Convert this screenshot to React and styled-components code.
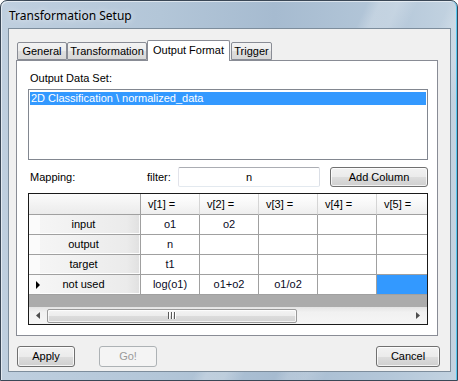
import React from "react";
import styled, { createGlobalStyle } from "styled-components";

const GlobalStyle = createGlobalStyle`
  html, body { margin: 0; padding: 0; background: #ffffff; }
  body { font-family: "Liberation Sans", Arial, sans-serif; font-size: 11px; color: #000; }
  * { box-sizing: border-box; }
`;

const Window = styled.div`
  width: 458px;
  height: 381px;
  display: flex;
  flex-direction: column;
  border: 1px solid #3a4756;
  border-radius: 7px 7px 0 0;
  overflow: hidden;
  background:
    linear-gradient(115deg, transparent 0 58%, rgba(255,255,255,0.22) 60% 63%, transparent 66% 71%, rgba(255,255,255,0.15) 73% 76%, transparent 79%),
    linear-gradient(90deg, #bfcfdf 0%, #b3c6d8 35%, #a6bbd0 60%, #b4c7d9 85%, #c3d3e1 100%);
  box-shadow: inset 1px 1px 0 rgba(255,255,255,0.55), inset -1px 0 0 #58c6f0;
`;

const TitleBar = styled.div`
  height: 27px;
  flex: none;
  display: flex;
  align-items: center;
  padding-left: 8px;
  padding-top: 1px;
  font-family: "Noto Sans", "Liberation Sans", sans-serif;
  font-size: 12px;
  color: #000;
  text-shadow: 0 0 6px rgba(255,255,255,0.9);
`;

const Client = styled.div`
  flex: 1;
  margin: 0 6px 8px 7px;
  background: #f0f0f0;
  border: 1px solid #7d8d9c;
  display: flex;
  flex-direction: column;
`;

const TabsArea = styled.div`
  margin: 11px 12px 0 7px;
  display: flex;
  flex-direction: column;
`;

const TabStrip = styled.div`
  height: 20px;
  display: flex;
  align-items: flex-end;
  padding-left: 1px;
`;

const Tab = styled.div`
  width: ${(p) => p.$w}px;
  margin-left: ${(p) => p.$ml || 0}px;
  height: ${(p) => (p.$active ? 21 : 18)}px;
  margin-bottom: ${(p) => (p.$active ? -1 : 0)}px;
  position: relative;
  z-index: ${(p) => (p.$active ? 2 : 1)};
  border: 1px solid #898c95;
  border-bottom: ${(p) => (p.$active ? "none" : "1px solid #898c95")};
  border-radius: 2px 2px 0 0;
  background: ${(p) =>
    p.$active
      ? "#ffffff"
      : "linear-gradient(#f3f3f3 0%, #ececec 50%, #dfdfdf 51%, #d7d7d7 100%)"};
  display: flex;
  align-items: ${(p) => (p.$active ? "flex-start" : "center")};
  justify-content: center;
  padding-top: ${(p) => (p.$active ? 3 : 1)}px;
  line-height: 13px;
  white-space: nowrap;
  font-size: 11px;
`;

const Panel = styled.div`
  height: 276px;
  border: 1px solid #898c95;
  background: #ffffff;
  padding: 11px 9px 0 11px;
  display: flex;
  flex-direction: column;
`;

const FieldLabel = styled.div`
  height: 13px;
  line-height: 13px;
  padding-left: 2px;
  margin-bottom: 4px;
`;

const ListBox = styled.div`
  width: 400px;
  height: 71px;
  border: 1px solid #828790;
  background: #fff;
  padding: 2px 1px;
`;

const ListItem = styled.div`
  height: 13px;
  line-height: 13px;
  padding-left: 1px;
  background: ${(p) => (p.$selected ? "#3399ff" : "transparent")};
  color: ${(p) => (p.$selected ? "#ffffff" : "#000")};
  white-space: nowrap;
`;

const MapRow = styled.div`
  margin-top: 7px;
  height: 20px;
  display: grid;
  grid-template-columns: 119px 31px 142px 98px;
  column-gap: 0;
  align-items: center;
  & > :last-child { margin-left: 10px; }
`;

const MapLabel = styled.div`
  padding-left: ${(p) => p.$pl || 0}px;
  line-height: 13px;
`;

const TextInput = styled.div`
  height: 20px;
  border: 1px solid #abadb3;
  border-color: #abadb3 #dbdfe6 #e3e9ef #e2e3ea;
  border-radius: 2px;
  background: #fff;
  display: flex;
  align-items: center;
  justify-content: center;
  line-height: 13px;
  width: 142px;
`;

const Button = styled.div`
  width: ${(p) => p.$w}px;
  height: ${(p) => p.$h || 21}px;
  flex: none;
  border: 1px solid ${(p) => (p.$disabled ? "#adb2b5" : "#707070")};
  border-radius: 3px;
  background: ${(p) =>
    p.$disabled
      ? "#f4f4f4"
      : "linear-gradient(#f2f2f2 0%, #ebebeb 50%, #dddddd 51%, #cfcfcf 100%)"};
  box-shadow: inset 0 0 0 1px ${(p) => (p.$disabled ? "#f4f4f4" : "rgba(255,255,255,0.75)")};
  color: ${(p) => (p.$disabled ? "#9a9a9a" : "#000")};
  display: flex;
  align-items: center;
  justify-content: center;
  line-height: 13px;
  margin-left: ${(p) => (p.$auto ? "auto" : `${p.$ml || 0}px`)};
`;

const Grid = styled.div`
  margin-top: 6px;
  width: 400px;
  height: 132px;
  border: 1px solid #1a1a1a;
  background: #ababab;
  display: flex;
  flex-direction: column;
  overflow: hidden;
`;

const GridRow = styled.div`
  display: grid;
  grid-template-columns: 112px repeat(5, 59px);
  height: ${(p) => p.$h}px;
  flex: none;
`;

const CornerCell = styled.div`
  border-right: 1px solid #a0a0a0;
  border-bottom: 1px solid #a0a0a0;
  background: linear-gradient(#fbfbfb, #f1f1f1 60%, #ebebeb);
`;

const HeadCell = styled.div`
  border-right: 1px solid #d5d5d5;
  border-bottom: 1px solid #a0a0a0;
  background: linear-gradient(#ffffff, #f7f7f7 55%, #eeeeee);
  padding-left: 7px;
  display: flex;
  align-items: center;
  line-height: 13px;
  white-space: nowrap;
  overflow: hidden;
`;

const RowHead = styled.div`
  position: relative;
  border-right: 1px solid #a0a0a0;
  border-bottom: 1px solid #a0a0a0;
  background: linear-gradient(90deg, #fbfbfb 0 11px, #f5f5f5 11px, #ebebeb 88%, #e1e1e1 99%, #fafafa 99%);
  box-shadow: inset 0 -1px 0 #fdfdfd;
  display: flex;
  align-items: center;
  justify-content: center;
  padding-right: 2px;
  line-height: 13px;
`;

const Indicator = styled.span`
  position: absolute;
  left: 7px;
  top: 6px;
  width: 0;
  height: 0;
  border-top: 4px solid transparent;
  border-bottom: 4px solid transparent;
  border-left: 4px solid #000;
`;

const Cell = styled.div`
  border-right: 1px solid #a0a0a0;
  border-bottom: 1px solid #a0a0a0;
  background: ${(p) => (p.$selected ? "#3399ff" : "#ffffff")};
  display: flex;
  align-items: center;
  justify-content: center;
  line-height: 13px;
  white-space: nowrap;
  color: #0a0a1e;
`;

const GreyFill = styled.div`
  flex: 1;
`;

const HScroll = styled.div`
  height: 17px;
  flex: none;
  background: linear-gradient(#e3e3e3, #f1f1f1 30%, #f5f5f5);
  display: flex;
  align-items: center;
  padding: 0 1px;
`;

const ArrowBox = styled.div`
  width: 16px;
  height: 15px;
  display: flex;
  align-items: center;
  justify-content: center;
`;

const Thumb = styled.div`
  margin-left: 1px;
  width: 250px;
  height: 14px;
  border: 1px solid #9a9a9a;
  border-radius: 2px;
  background: linear-gradient(#f4f4f4 0%, #ececec 50%, #dcdcdc 51%, #d4d4d4 100%);
  box-shadow: inset 0 0 0 1px rgba(255,255,255,0.7);
  display: flex;
  align-items: center;
  justify-content: center;
`;

const ButtonsRow = styled.div`
  display: flex;
  align-items: center;
  margin-top: 10px;
  padding: 0 10px 0 8px;
`;

const ArrowLeft = () => (
  <svg width="4" height="7" viewBox="0 0 4 7">
    <path d="M4 0 L0 3.5 L4 7 Z" fill="#4d4d4d" />
  </svg>
);
const ArrowRight = () => (
  <svg width="4" height="7" viewBox="0 0 4 7">
    <path d="M0 0 L4 3.5 L0 7 Z" fill="#4d4d4d" />
  </svg>
);
const Grip = () => (
  <svg width="8" height="7" viewBox="0 0 8 7">
    <rect x="0" y="0" width="1" height="7" fill="#5a5a5a" />
    <rect x="3" y="0" width="1" height="7" fill="#5a5a5a" />
    <rect x="6" y="0" width="1" height="7" fill="#5a5a5a" />
    <rect x="1" y="0" width="1" height="7" fill="#ffffff" />
    <rect x="4" y="0" width="1" height="7" fill="#ffffff" />
    <rect x="7" y="0" width="1" height="7" fill="#ffffff" />
  </svg>
);

const rows = [
  { name: "input", cells: ["o1", "o2", "", "", ""] },
  { name: "output", cells: ["n", "", "", "", ""] },
  { name: "target", cells: ["t1", "", "", "", ""] },
  { name: "not used", cells: ["log(o1)", "o1+o2", "o1/o2", "", ""], current: true, selectedCol: 4 },
];

export default function App() {
  return (
    <>
      <GlobalStyle />
      <Window>
        <TitleBar>Transformation Setup</TitleBar>
        <Client>
          <TabsArea>
            <TabStrip>
              <Tab $w={50}>General</Tab>
              <Tab $w={80}>Transformation</Tab>
              <Tab $w={83} $active>Output Format</Tab>
              <Tab $w={41} $ml={1}>Trigger</Tab>
            </TabStrip>
            <Panel>
              <FieldLabel>Output Data Set:</FieldLabel>
              <ListBox>
                <ListItem $selected>2D Classification \ normalized_data</ListItem>
              </ListBox>
              <MapRow>
                <MapLabel $pl={2}>Mapping:</MapLabel>
                <MapLabel>filter:</MapLabel>
                <TextInput>n</TextInput>
                <Button $w={98} $h={20}>Add Column</Button>
              </MapRow>
              <Grid>
                <GridRow $h={21}>
                  <CornerCell />
                  {[1, 2, 3, 4, 5].map((i) => (
                    <HeadCell key={i}>v[{i}] =</HeadCell>
                  ))}
                </GridRow>
                {rows.map((r) => (
                  <GridRow $h={20} key={r.name}>
                    <RowHead>
                      {r.current && <Indicator />}
                      {r.name}
                    </RowHead>
                    {r.cells.map((c, i) => (
                      <Cell key={i} $selected={r.selectedCol === i}>
                        {c}
                      </Cell>
                    ))}
                  </GridRow>
                ))}
                <GreyFill />
                <HScroll>
                  <ArrowBox>
                    <ArrowLeft />
                  </ArrowBox>
                  <Thumb>
                    <Grip />
                  </Thumb>
                  <GreyFill />
                  <ArrowBox>
                    <ArrowRight />
                  </ArrowBox>
                </HScroll>
              </Grid>
            </Panel>
          </TabsArea>
          <ButtonsRow>
            <Button $w={58}>Apply</Button>
            <Button $w={58} $ml={24} $disabled>
              Go!
            </Button>
            <Button $w={64} $auto>
              Cancel
            </Button>
          </ButtonsRow>
        </Client>
      </Window>
    </>
  );
}
